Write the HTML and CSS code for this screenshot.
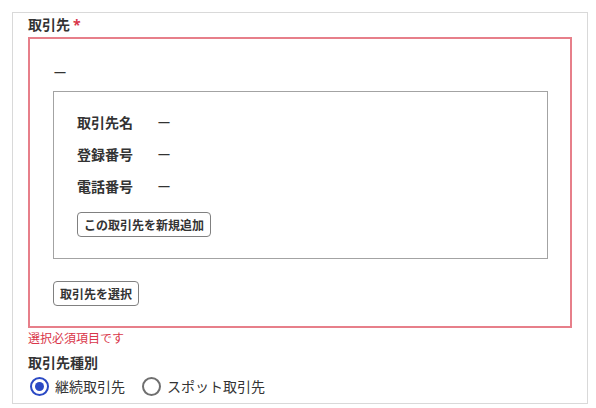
FILE: index.html
```html
<!DOCTYPE html>
<html lang="ja">
<head>
<meta charset="utf-8">
<link rel="stylesheet" href="styles.css">
</head>
<body>
<div class="card">
  <div class="field-label">取引先<span class="req">*</span></div>
  <div class="select-box">
    <div class="dash-line">ー</div>
    <div class="detail-box">
      <div class="rows">
        <div class="row"><span class="row-label">取引先名</span><span class="row-value">ー</span></div>
        <div class="row"><span class="row-label">登録番号</span><span class="row-value">ー</span></div>
        <div class="row"><span class="row-label">電話番号</span><span class="row-value">ー</span></div>
      </div>
      <button class="btn add-btn" type="button">この取引先を新規追加</button>
    </div>
    <button class="btn select-btn" type="button">取引先を選択</button>
  </div>
  <div class="error">選択必須項目です</div>
  <div class="field-label type-label">取引先種別</div>
  <div class="radio-row">
    <label class="radio-item"><span class="radio checked"><span class="dot"></span></span><span class="radio-text">継続取引先</span></label>
    <label class="radio-item"><span class="radio"></span><span class="radio-text">スポット取引先</span></label>
  </div>
</div>
</body>
</html>
```
FILE: styles.css
```css
html, body {
  margin: 0;
  padding: 0;
  background: #ffffff;
}
body {
  font-family: "Noto Sans CJK JP", "Noto Sans", sans-serif;
  color: #333333;
}
.card {
  margin: 12px 0 0 12px;
  width: 576px;
  height: 392px;
  box-sizing: border-box;
  border: 1px solid #d9d9d9;
  padding: 1px 15px 0;
  overflow: hidden;
}
.field-label {
  font-size: 14px;
  font-weight: 700;
  line-height: 20px;
  margin: 0 0 2px;
}
.req {
  color: #d9364a;
  margin-left: 3px;
  font-family: "Noto Sans", sans-serif;
}
.select-box {
  border: 2px solid #e77f8a;
  padding: 23px 22px 20px 23px;
}
.dash-line {
  font-size: 14px;
  line-height: 20px;
  margin-bottom: 9px;
}
.detail-box {
  border: 1px solid #a3a3a3;
  height: 168px;
  box-sizing: border-box;
  padding: 20px 23px 21px;
  margin-bottom: 22px;
}
.rows {
  display: flex;
  flex-direction: column;
  gap: 12px;
  margin-bottom: 16px;
}
.row {
  display: grid;
  grid-template-columns: 80px auto;
  font-size: 14px;
  line-height: 20px;
}
.row-label {
  font-weight: 700;
}
.btn {
  display: block;
  height: 25px;
  box-sizing: border-box;
  border: 1px solid #808080;
  border-radius: 4px;
  background: #ffffff;
  padding: 0 6px;
  font-family: "Noto Sans CJK JP", sans-serif;
  font-size: 12px;
  font-weight: 700;
  color: #333333;
  line-height: 23px;
}
.error {
  color: #d9364a;
  font-size: 12px;
  line-height: 18px;
  margin-top: 1px;
}
.type-label {
  margin: 5px 0 0;
}
.radio-row {
  display: flex;
  align-items: center;
  height: 24px;
  margin-top: 2px;
  gap: 17px;
  padding-left: 2px;
}
.radio-item {
  display: flex;
  align-items: center;
  gap: 6px;
  font-size: 14px;
  line-height: 20px;
}
.radio {
  width: 19px;
  height: 19px;
  box-sizing: border-box;
  border: 2px solid #6f6f6f;
  border-radius: 50%;
  display: flex;
  align-items: center;
  justify-content: center;
}
.radio.checked {
  border-color: #2b49c4;
}
.dot {
  width: 9px;
  height: 9px;
  border-radius: 50%;
  background: #2b49c4;
}
```
